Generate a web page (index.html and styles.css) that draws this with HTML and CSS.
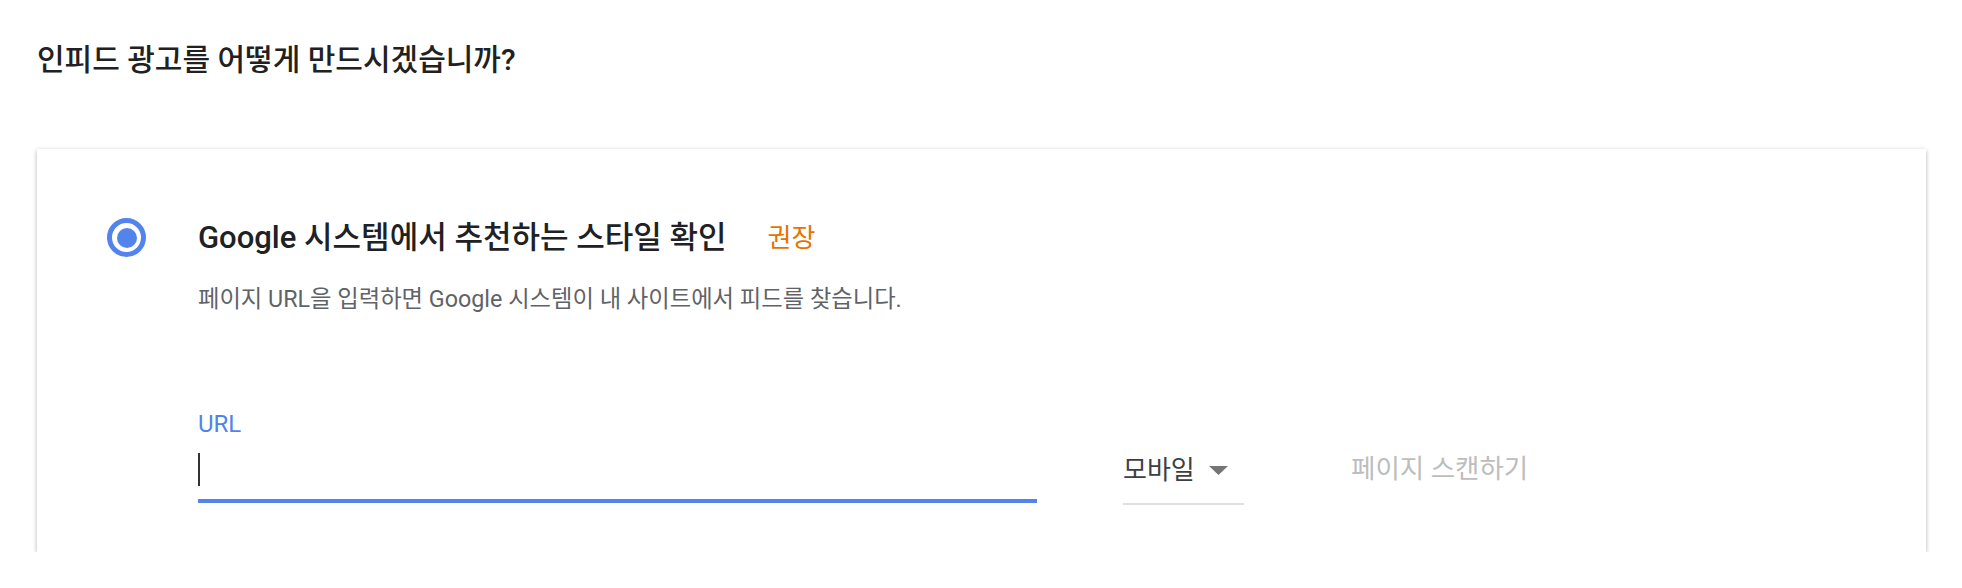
FILE: index.html
```html
<!DOCTYPE html>
<html lang="ko">
<head>
<meta charset="utf-8">
<title>인피드 광고</title>
<link rel="stylesheet" href="styles.css">
</head>
<body>
<main class="page">
  <h1 class="title">인피드 광고를 어떻게 만드시겠습니까?</h1>
  <section class="card">
    <div class="option">
      <span class="radio"><span class="radio-dot"></span></span>
      <div class="option-body">
        <div class="option-head">
          <span class="option-title">Google 시스템에서 추천하는 스타일 확인</span>
          <span class="badge">권장</span>
        </div>
        <p class="option-desc">페이지 URL을 입력하면 Google 시스템이 내 사이트에서 피드를 찾습니다.</p>
        <div class="form-row">
          <div class="field">
            <span class="field-label">URL</span>
            <span class="field-input"><span class="caret"></span></span>
          </div>
          <div class="select">
            <span class="select-value">모바일</span>
            <svg class="select-arrow" width="19" height="9" viewBox="0 0 19 9"><path d="M0 0H19L9.5 9Z"/></svg>
          </div>
          <button class="scan" type="button">페이지 스캔하기</button>
        </div>
      </div>
    </div>
  </section>
</main>
</body>
</html>
```

FILE: styles.css
```css
* { box-sizing: border-box; }

html, body {
  margin: 0;
  background: #ffffff;
}

body {
  font-family: Roboto, "Noto Sans CJK KR", sans-serif;
  color: #202124;
}

.page {
  padding: 0 36px 0 37px;
}

.title {
  margin: 0;
  padding-top: 42px;
  font-size: 30px;
  line-height: 36px;
  font-weight: 500;
  color: #212121;
}

.card {
  margin-top: 71px;
  background: #fff;
  box-shadow: 0 3px 1px -1px rgba(0,0,0,.3), 0 2px 4px 0 rgba(0,0,0,.22), 0 0 5px 0 rgba(0,0,0,.1);
  padding: 69px 70px 49px 70px;
}

.option {
  display: flex;
  align-items: flex-start;
}

.radio {
  flex: none;
  width: 39px;
  height: 39px;
  border: 5px solid #5384ec;
  border-radius: 50%;
  display: flex;
  align-items: center;
  justify-content: center;
  margin-right: 52px;
}

.radio-dot {
  width: 20px;
  height: 20px;
  border-radius: 50%;
  background: #5384ec;
}

.option-body {
  flex: 1;
}

.option-head {
  display: flex;
  align-items: center;
  height: 40px;
}

.option-title {
  font-size: 31px;
  line-height: 40px;
  font-weight: 500;
  color: #202124;
}

.badge {
  margin-left: 41px;
  font-size: 26px;
  line-height: 40px;
  color: #e37400;
}

.option-desc {
  margin: 26px 0 0;
  height: 30px;
  font-size: 23.3px;
  line-height: 30px;
  color: #5f6368;
}

.form-row {
  margin-top: 98px;
  display: flex;
  align-items: flex-end;
}

.field {
  width: 839px;
  display: flex;
  flex-direction: column;
}

.field-label {
  height: 24px;
  font-size: 24px;
  line-height: 24px;
  color: #4f84ec;
}

.field-input {
  display: block;
  height: 67px;
  padding: 17px 0 0;
  border-bottom: 4px solid #5384ec;
}

.caret {
  display: block;
  width: 2px;
  height: 33px;
  background: #333;
}

.select {
  margin-left: 86px;
  margin-bottom: -2px;
  width: 121px;
  display: flex;
  align-items: center;
  padding-bottom: 17px;
  border-bottom: 2px solid #e0e0e0;
}

.select-value {
  font-size: 26px;
  line-height: 32px;
  color: #3c4043;
}

.select-arrow {
  margin-left: 14px;
  fill: #757575;
}

.scan {
  margin-left: 91px;
  padding: 0 16px 18px;
  border: 0;
  background: transparent;
  font-family: inherit;
  font-size: 26.5px;
  line-height: 32px;
  color: #bdbdbd;
}
```
